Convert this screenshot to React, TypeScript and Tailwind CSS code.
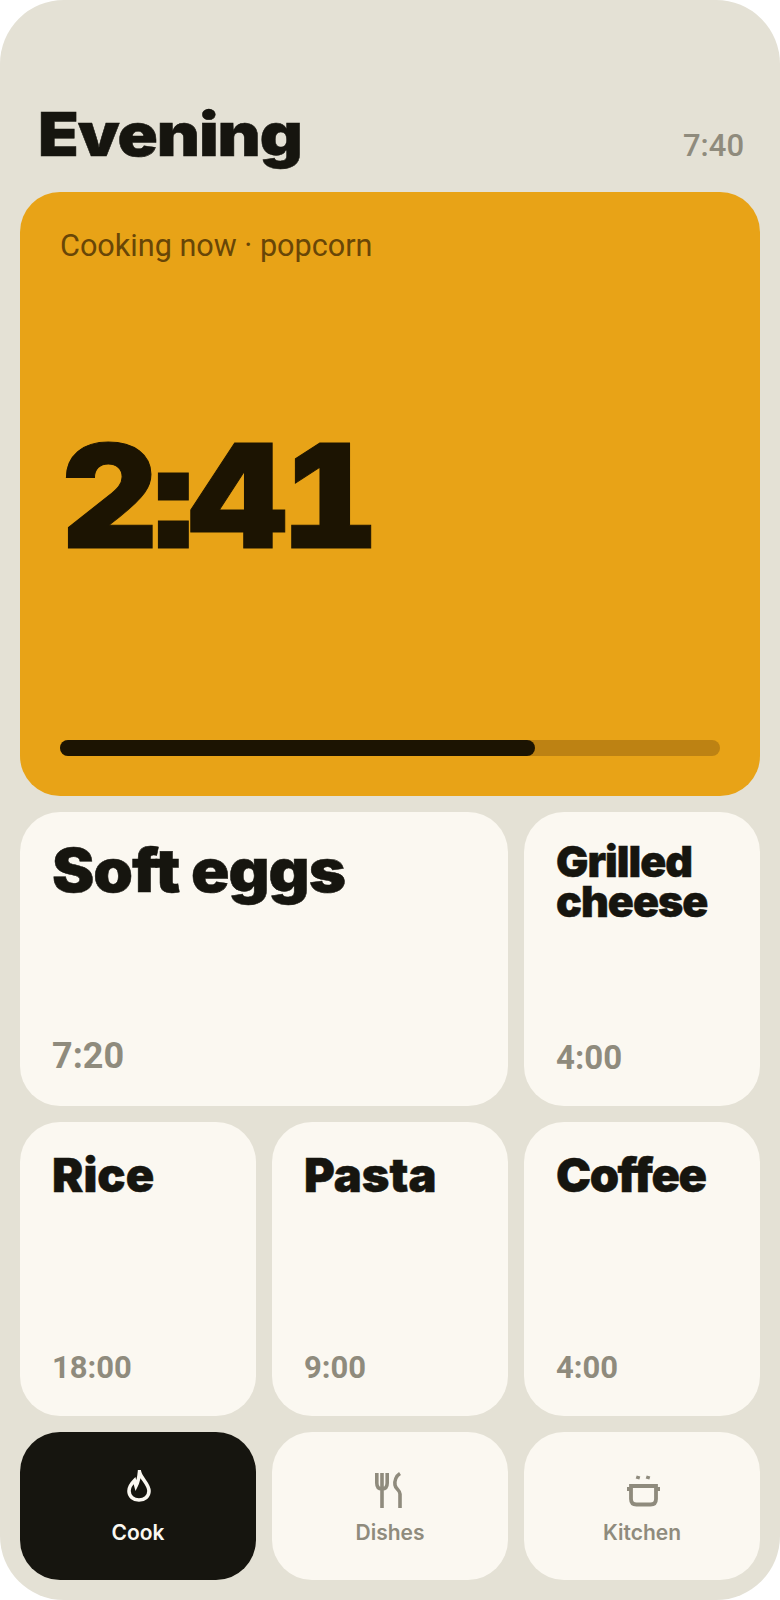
import { ReactNode } from "react";

function FlameIcon() {
  return (
    <svg width="40" height="40" viewBox="0 0 40 40" fill="none" stroke="currentColor" strokeWidth="3.6" strokeMiterlimit="8">
      <path d="M21.5 2 C23 8.5 31 14 31 21 C31 26.5 26.5 30 21 30 C15.5 30 11 26.5 11 21 C11 16.5 14 13 16.5 10.5 L18 16 C19.5 13 21 8 21.5 2 Z" />
    </svg>
  );
}

function ForkKnifeIcon() {
  return (
    <svg width="40" height="40" viewBox="0 0 40 40" fill="none" stroke="currentColor" strokeWidth="3.6">
      <path d="M6.8 3 V13 C6.8 17 9 19 12 19 C15 19 17.2 17 17.2 13 V3 M12 3 V38" />
      <path d="M30 3.5 C26 6 24.5 11 25 15 C25.5 19 30 20 30 24 V38" />
    </svg>
  );
}

function PotIcon() {
  return (
    <svg width="40" height="40" viewBox="0 0 40 40" fill="none" stroke="currentColor" strokeWidth="3.8">
      <path d="M9 16 H34 V29 C34 32.5 32 34.5 28.5 34.5 H14.5 C11 34.5 9 32.5 9 29 Z" />
      <path d="M5 19 H9 M34 19 H38" />
      <path d="M16.5 6 L15.5 9 M26.5 6 L25.5 9" />
    </svg>
  );
}

function Dish({ name, time, titleClass, timeClass }: { name: ReactNode; time: string; titleClass: string; timeClass: string }) {
  return (
    <div className="flex flex-col justify-between rounded-[40px] bg-[#fbf8f1] px-8 pt-[26px]">
      <div className={`font-['Inter',sans-serif] font-black text-[#16150f] [-webkit-text-stroke:0.5px_#16150f] ${titleClass}`}>{name}</div>
      <div className={`font-['Roboto',sans-serif] font-bold text-[#8f8b7d] ${timeClass}`}>{time}</div>
    </div>
  );
}

function NavItem({ label, icon, active }: { label: string; icon: ReactNode; active?: boolean }) {
  return (
    <div className={`flex flex-col items-center gap-[11px] rounded-[40px] pt-[38px] ${active ? "bg-[#16150f] text-[#fbf8f1]" : "bg-[#fbf8f1] text-[#8f8b7d]"}`}>
      {icon}
      <span className="text-[21px] leading-6 font-semibold">{label}</span>
    </div>
  );
}

export default function App() {
  return (
    <div className="flex h-[1600px] w-[780px] flex-col rounded-[64px] bg-[#e4e1d5] px-5 pb-5 font-['Inter',sans-serif]">
      <div className="flex h-[192px] items-end justify-between pr-[16px] pl-[18px] pb-[22px]">
        <h1 className="origin-left scale-x-[1.11] text-[60px] leading-[72px] font-black tracking-[-1px] text-[#16150f] [-webkit-text-stroke:0.5px_#16150f]">Evening</h1>
        <span className="pb-[6px] font-['Roboto',sans-serif] text-[31px] leading-9 font-medium text-[#8f8b7d]">7:40</span>
      </div>
      <div className="flex h-[604px] flex-col rounded-[40px] bg-[#e8a317] px-10 pt-9 pb-10">
        <div className="font-['Roboto',sans-serif] text-[30.6px] leading-9 text-[#684607]">Cooking now · popcorn</div>
        <div className="mt-[160px] ml-px origin-left scale-x-[1.04] text-[144px] leading-[144px] font-black tracking-[-4px] text-[#1c1402] [-webkit-text-stroke:1px_#1c1402] [font-feature-settings:'ss07','tnum']">2:41</div>
        <div className="mt-auto h-4 rounded-full bg-[#bd8213]">
          <div className="h-4 w-[72%] rounded-full bg-[#1c1402]" />
        </div>
      </div>
      <div className="mt-4 grid h-[604px] grid-cols-3 grid-rows-2 gap-4">
        <div className="col-span-2 grid">
          <Dish name={<span className="inline-block origin-left scale-x-[1.06]">Soft eggs</span>} time="7:20" titleClass="text-[60px] leading-[64px] tracking-[-1px]" timeClass="mb-[30px] text-[36px] leading-10" />
        </div>
        <Dish name={<>Grilled<br />cheese</>} time="4:00" titleClass="mt-[3px] text-[43px] leading-10 tracking-[-1px]" timeClass="mb-[28px] text-[33px] leading-10" />
        <Dish name="Rice" time="18:00" titleClass="-mt-px text-[47px] leading-[56px] tracking-normal" timeClass="mb-[28px] text-[31px] leading-10" />
        <Dish name="Pasta" time="9:00" titleClass="-mt-px text-[47px] leading-[56px] tracking-normal" timeClass="mb-[28px] text-[31px] leading-10" />
        <Dish name="Coffee" time="4:00" titleClass="-mt-px text-[47px] leading-[56px] tracking-[-1.5px]" timeClass="mb-[28px] text-[31px] leading-10" />
      </div>
      <div className="mt-4 grid flex-1 grid-cols-3 gap-4">
        <NavItem label="Cook" icon={<FlameIcon />} active />
        <NavItem label="Dishes" icon={<ForkKnifeIcon />} />
        <NavItem label="Kitchen" icon={<PotIcon />} />
      </div>
    </div>
  );
}
